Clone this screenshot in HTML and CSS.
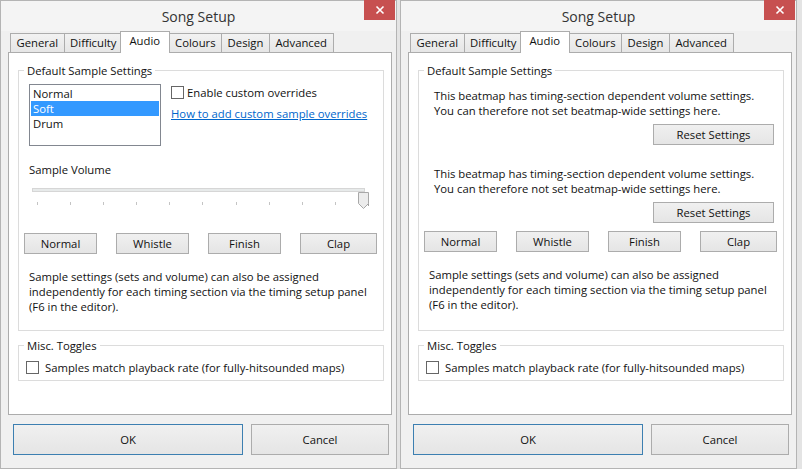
FILE: index.html
```html
<!DOCTYPE html>
<html lang="en">
<head>
    <meta charset="UTF-8">
    <title>Song Setup</title>
    <link rel="stylesheet" href="styles.css">
</head>
<body>

    <!-- window 1: editable sample settings -->
    <div class="window">
        <div class="titlebar">
            <span class="title">Song Setup</span>
            <button class="close-btn" aria-label="Close">
                <svg width="10" height="10" viewBox="0 0 10 10"><path d="M1.5 1.5 L8.5 8.5 M8.5 1.5 L1.5 8.5" stroke="#fff" stroke-width="1.6"/></svg>
            </button>
        </div>
        <div class="tabs">
            <span class="tab">General</span>
            <span class="tab">Difficulty</span>
            <span class="tab active">Audio</span>
            <span class="tab">Colours</span>
            <span class="tab">Design</span>
            <span class="tab">Advanced</span>
        </div>
        <div class="tab-panel">
            <fieldset class="group group-main">
                <legend>Default Sample Settings</legend>
                <div class="group-body">
                    <div class="sample-row">
                        <ul class="listbox">
                            <li>Normal</li>
                            <li class="selected">Soft</li>
                            <li>Drum</li>
                        </ul>
                        <div class="overrides">
                            <label class="check"><span class="box"></span>Enable custom overrides</label>
                            <a class="link" href="#">How to add custom sample overrides</a>
                        </div>
                    </div>
                    <div class="volume-label">Sample Volume</div>
                    <div class="slider">
                        <div class="track"></div>
                        <svg class="thumb" width="11" height="17" viewBox="0 0 11 17"><path d="M0.5 0.5 H10.5 V11.5 L5.5 16.5 L0.5 11.5 Z" fill="#ececec" stroke="#a8a8a8"/></svg>
                        <div class="ticks">
                            <i></i><i></i><i></i><i></i><i></i><i></i><i></i><i></i><i></i><i></i><i></i>
                        </div>
                    </div>
                    <div class="sound-buttons">
                        <button class="btn">Normal</button>
                        <button class="btn">Whistle</button>
                        <button class="btn">Finish</button>
                        <button class="btn clap">Clap</button>
                    </div>
                    <p class="note">Sample settings (sets and volume) can also be assigned<br>independently for each timing section via the timing setup panel<br>(F6 in the editor).</p>
                </div>
            </fieldset>
            <fieldset class="group group-misc">
                <legend>Misc. Toggles</legend>
                <div class="group-body">
                    <label class="check wide"><span class="box"></span>Samples match playback rate (for fully-hitsounded maps)</label>
                </div>
            </fieldset>
        </div>
        <div class="dialog-buttons">
            <button class="btn ok">OK</button>
            <button class="btn cancel">Cancel</button>
        </div>
    </div>

    <!-- window 2: timing-section dependent volume -->
    <div class="window">
        <div class="titlebar">
            <span class="title">Song Setup</span>
            <button class="close-btn" aria-label="Close">
                <svg width="10" height="10" viewBox="0 0 10 10"><path d="M1.5 1.5 L8.5 8.5 M8.5 1.5 L1.5 8.5" stroke="#fff" stroke-width="1.6"/></svg>
            </button>
        </div>
        <div class="tabs">
            <span class="tab">General</span>
            <span class="tab">Difficulty</span>
            <span class="tab active">Audio</span>
            <span class="tab">Colours</span>
            <span class="tab">Design</span>
            <span class="tab">Advanced</span>
        </div>
        <div class="tab-panel">
            <fieldset class="group group-main">
                <legend>Default Sample Settings</legend>
                <div class="group-body">
                    <p class="notice">This beatmap has timing-section dependent volume settings.<br>You can therefore not set beatmap-wide settings here.</p>
                    <div class="reset-row"><button class="btn reset">Reset Settings</button></div>
                    <p class="notice second">This beatmap has timing-section dependent volume settings.<br>You can therefore not set beatmap-wide settings here.</p>
                    <div class="reset-row"><button class="btn reset">Reset Settings</button></div>
                    <div class="sound-buttons tight">
                        <button class="btn">Normal</button>
                        <button class="btn">Whistle</button>
                        <button class="btn">Finish</button>
                        <button class="btn clap">Clap</button>
                    </div>
                    <p class="note">Sample settings (sets and volume) can also be assigned<br>independently for each timing section via the timing setup panel<br>(F6 in the editor).</p>
                </div>
            </fieldset>
            <fieldset class="group group-misc">
                <legend>Misc. Toggles</legend>
                <div class="group-body">
                    <label class="check wide"><span class="box"></span>Samples match playback rate (for fully-hitsounded maps)</label>
                </div>
            </fieldset>
        </div>
        <div class="dialog-buttons">
            <button class="btn ok">OK</button>
            <button class="btn cancel">Cancel</button>
        </div>
    </div>

</body>
</html>
```

FILE: styles.css
```css
* {
    box-sizing: border-box;
}

body {
    margin: 0;
    height: 469px;
    overflow: hidden;
    display: flex;
    gap: 3px;
    background-color: #e4e4e4;
    font-family: "Open Sans", "Noto Sans", sans-serif;
    font-size: 11.3px;
    line-height: 15px;
    color: #111;
}

.window {
    width: 397px;
    height: 469px;
    display: flex;
    flex-direction: column;
    padding: 0 4px 0 7px;
    background-color: #f0f0f0;
    border: 1px solid #b4b4b4;
}

/* title bar */
.titlebar {
    height: 30px;
    margin: 0 -4px 0 -7px;
    display: grid;
    grid-template-columns: 1fr auto 1fr;
    align-items: start;
    background-color: #f4f4f4;
}

.title {
    grid-column: 2;
    line-height: 31px;
    font-size: 14px;
    color: #333;
}

.close-btn {
    grid-column: 3;
    justify-self: end;
    width: 31px;
    height: 20px;
    margin: -1px 1px 0 0;
    padding: 0;
    border: none;
    background-color: #c75050;
    display: flex;
    align-items: center;
    justify-content: center;
}

/* tabs */
.tabs {
    height: 21px;
    display: flex;
    align-items: flex-end;
    padding-left: 2px;
}

.tab {
    height: 19px;
    padding: 0 5.5px;
    margin-right: -1px;
    line-height: 18px;
    border: 1px solid #acacac;
    border-bottom: none;
    background: linear-gradient(#f2f2f2, #e6e6e6);
}

.tab.active {
    position: relative;
    z-index: 1;
    height: 22px;
    margin: 0 -1px -1px -2px;
    padding: 0 8.5px;
    line-height: 18px;
    background: #fff;
}

.tab-panel {
    width: 384px;
    height: 363px;
    padding: 0 7px 0 9px;
    background-color: #fff;
    border: 1px solid #acacac;
}

/* group boxes */
.group {
    margin: 10px 0 0;
    padding: 0;
    min-width: 0;
    border: 1px solid #dcdcdc;
}

.group legend {
    margin-left: 5px;
    padding: 0 3px;
    line-height: 15px;
}

.group-main {
    height: 268px;
}

.group-main .group-body {
    padding: 6px 6px 0 5px;
}

.group-misc {
    height: 43px;
    margin-top: 7px;
}

.group-misc .group-body {
    padding: 6px 0 0 7px;
}

.sample-row {
    display: flex;
    gap: 10px;
}

.listbox {
    width: 132px;
    height: 62px;
    margin: 0 0 0 5px;
    padding: 1px;
    list-style: none;
    border: 1px solid #828790;
}

.listbox li {
    height: 15px;
    padding-left: 2px;
}

.listbox .selected {
    background-color: #3399ff;
    color: #fff;
}

.check {
    display: flex;
    align-items: center;
    gap: 3px;
    height: 16px;
}

.check.wide {
    gap: 6px;
}

.box {
    width: 13px;
    height: 13px;
    background-color: #fff;
    border: 1px solid #666;
}

.link {
    display: block;
    margin-top: 6px;
    color: #0066cc;
}

.volume-label {
    margin: 16px 0 0 5px;
}

.slider {
    position: relative;
    width: 336px;
    margin-left: 8px;
}

.track {
    width: 333px;
    height: 4px;
    margin-top: 11px;
    background-color: #e7eaea;
    border: 1px solid #d6d6d6;
}

.thumb {
    position: absolute;
    top: 4px;
    left: 326px;
}

.ticks {
    display: flex;
    justify-content: space-between;
    width: 332px;
    margin: 10px 0 0 5px;
}

.ticks i {
    width: 1px;
    height: 3px;
    background-color: #c4c4c4;
}

.ticks i:last-child {
    height: 4px;
    background-color: #a0a0a0;
}

/* buttons */
.btn {
    height: 21px;
    padding: 0;
    font: inherit;
    color: #111;
    border: 1px solid #acacac;
    background: linear-gradient(#f0f0f0, #e5e5e5);
}

.sound-buttons {
    display: flex;
    justify-content: space-between;
    margin-top: 27px;
}

.sound-buttons.tight {
    margin-top: 8px;
}

.sound-buttons .btn {
    width: 73px;
}

.sound-buttons .clap {
    width: 77px;
}

.note {
    margin: 15px 0 0 5px;
}

.notice {
    margin: 4px 0 0 10px;
}

.notice.second {
    margin-top: 21px;
}

.reset-row {
    display: flex;
    justify-content: flex-end;
    padding-right: 3px;
    margin-top: 6px;
}

.reset {
    width: 121px;
}

.dialog-buttons {
    display: flex;
    gap: 8px;
    margin-top: 9px;
    padding-left: 5px;
}

.dialog-buttons .btn {
    height: 31px;
}

.ok {
    width: 230px;
    border-color: #3c7fb1;
}

.cancel {
    width: 138px;
}
```
